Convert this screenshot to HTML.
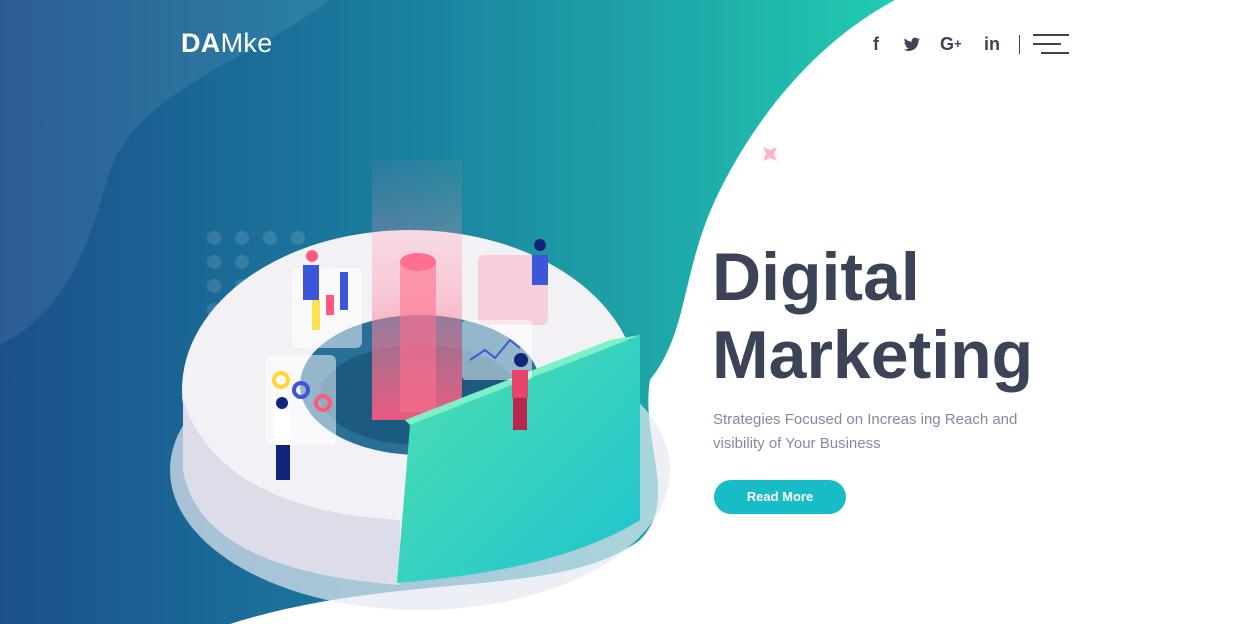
<!DOCTYPE html>
<html><head><meta charset="utf-8"><style>
html,body{margin:0;padding:0;width:1242px;height:624px;overflow:hidden;background:#fff;font-family:"Liberation Sans",sans-serif;position:relative}
.abs{position:absolute}
</style></head><body>
<svg class="abs" style="left:0;top:0" width="1242" height="624">
<defs>
<linearGradient id="bg" x1="0" y1="0" x2="1" y2="0">
<stop offset="0" stop-color="#1b4f8c"/><stop offset="0.45" stop-color="#1a7f9f"/><stop offset="1" stop-color="#22cbb0"/>
</linearGradient>
<linearGradient id="teal" x1="0" y1="0" x2="1" y2="1">
<stop offset="0" stop-color="#4fe0b0"/><stop offset="1" stop-color="#1fc3d0"/>
</linearGradient>
<linearGradient id="pink" x1="0" y1="0" x2="0" y2="1">
<stop offset="0" stop-color="#ff8fa8" stop-opacity="0.05"/><stop offset="0.5" stop-color="#ff8fa8" stop-opacity="0.4"/><stop offset="1" stop-color="#ff5a7e" stop-opacity="0.9"/>
</linearGradient>
</defs>
<path d="M0 0 H895 C820 40 760 110 720 190 C680 270 690 330 650 380 C640 440 680 500 640 540 C560 600 400 570 230 624 H0 Z" fill="url(#bg)"/>
<path d="M0 0 H330 C250 60 140 90 110 170 C90 240 70 310 0 345 Z" fill="#fff" opacity="0.08"/>
<g fill="#fff" opacity="0.12">
<circle cx="214" cy="238" r="7"/><circle cx="242" cy="238" r="7"/><circle cx="270" cy="238" r="7"/><circle cx="298" cy="238" r="7"/>
<circle cx="214" cy="262" r="7"/><circle cx="242" cy="262" r="7"/><circle cx="214" cy="286" r="7"/><circle cx="242" cy="286" r="7"/>
<circle cx="214" cy="310" r="7"/>
</g>
<ellipse cx="420" cy="470" rx="250" ry="140" fill="#e6e8f2" opacity="0.7"/>
<path d="M183 400 Q180 560 400 580 L400 470 Z" fill="#d5d8e6"/>
<ellipse cx="410" cy="390" rx="228" ry="160" fill="#f2f2f6"/>
<path d="M183 400 L183 470 Q200 570 400 585 L400 520 Q220 510 183 400Z" fill="#dcdde8"/>
<ellipse cx="420" cy="385" rx="120" ry="70" fill="#2a6f96"/>
<ellipse cx="420" cy="395" rx="100" ry="50" fill="#1d5a80"/>
<rect x="372" y="160" width="90" height="260" fill="url(#pink)"/>
<ellipse cx="418" cy="262" rx="18" ry="9" fill="#ff6f8f"/>
<rect x="400" y="262" width="36" height="150" fill="#ff6f8f" opacity="0.6"/>
<path d="M410 425 L640 335 L640 520 Q560 570 397 583 Z" fill="url(#teal)"/>
<path d="M410 425 L640 335 L610 340 L405 420 Z" fill="#7ef0c8"/>
<rect x="292" y="268" width="70" height="80" rx="6" fill="#fff" opacity="0.5"/>
<rect x="478" y="255" width="70" height="70" rx="6" fill="#ff8fa8" opacity="0.35"/>
<rect x="462" y="320" width="70" height="60" rx="4" fill="#fff" opacity="0.5"/>
<rect x="266" y="355" width="70" height="90" rx="6" fill="#fff" opacity="0.5"/>
<rect x="340" y="272" width="8" height="38" fill="#3b57d8"/><rect x="326" y="295" width="8" height="20" fill="#ff5a7e"/><rect x="312" y="300" width="8" height="30" fill="#ffe14d"/>
<circle cx="281" cy="380" r="7" fill="none" stroke="#ffd633" stroke-width="4"/>
<circle cx="301" cy="390" r="7" fill="none" stroke="#3b57d8" stroke-width="4"/>
<circle cx="323" cy="403" r="7" fill="none" stroke="#ff5a7e" stroke-width="4"/>
<path d="M470 360 L485 350 L495 358 L510 340 L520 348" stroke="#3b57d8" stroke-width="2" fill="none"/>
<rect x="274" y="410" width="16" height="35" fill="#fff"/><rect x="276" y="445" width="14" height="35" fill="#12237a"/><circle cx="282" cy="403" r="6" fill="#12237a"/>
<rect x="512" y="370" width="16" height="28" fill="#e8446a"/><rect x="513" y="398" width="14" height="32" fill="#b8264e"/><circle cx="521" cy="360" r="7" fill="#12237a"/>
<rect x="532" y="255" width="16" height="30" fill="#3b57d8"/><circle cx="540" cy="245" r="6" fill="#12237a"/>
<circle cx="312" cy="256" r="6" fill="#ff5a7e"/><rect x="303" y="265" width="16" height="35" fill="#3b57d8"/>
<path d="M763 147 l7 3 l7 -3 l-3 7 l3 7 l-7 -3 l-7 3 l3 -7z" fill="#ffb3c7"/>
<!-- twitter -->
<path transform="translate(904,37) scale(0.68)" fill="#3d4554" d="M23.6 3.3c-.9.4-1.8.6-2.8.8 1-.6 1.8-1.6 2.1-2.7-.9.6-2 1-3.1 1.2C18.9 1.6 17.6 1 16.2 1c-2.7 0-4.9 2.2-4.9 4.9 0 .4 0 .8.1 1.1C7.3 6.8 3.7 4.9 1.3 1.9.8 2.7.6 3.5.6 4.4c0 1.7.9 3.2 2.2 4.1-.8 0-1.6-.2-2.2-.6v.1c0 2.4 1.7 4.4 3.9 4.8-.4.1-.8.2-1.3.2-.3 0-.6 0-.9-.1.6 2 2.4 3.4 4.6 3.4-1.7 1.3-3.8 2.1-6.1 2.1-.4 0-.8 0-1.2-.1 2.2 1.4 4.8 2.2 7.5 2.2 9.1 0 14-7.5 14-14v-.6c1-.7 1.8-1.6 2.5-2.6z"/>
</svg>
<div class="abs" style="left:181px;top:28px;color:#fff;font-size:27px;letter-spacing:0.3px"><b>DA</b>Mke</div>
<div class="abs" style="left:873px;top:34px;color:#3d4554;font-size:18px;font-weight:bold">f</div>
<div class="abs" style="left:940px;top:34px;color:#3d4554;font-size:18px;font-weight:bold">G<span style="font-size:13px;vertical-align:2px">+</span></div>
<div class="abs" style="left:984px;top:34px;color:#3d4554;font-size:18px;font-weight:bold">in</div>
<div class="abs" style="left:1019px;top:35px;width:1px;height:19px;background:#3d4554"></div>
<div class="abs" style="left:1033px;top:34px;width:36px;height:2px;background:#3d4554"></div>
<div class="abs" style="left:1033px;top:43px;width:28px;height:2px;background:#3d4554"></div>
<div class="abs" style="left:1041px;top:52px;width:28px;height:2px;background:#3d4554"></div>
<div class="abs" style="left:712px;top:238px;color:#3a4456;font-size:68px;line-height:78px;font-weight:bold;letter-spacing:0px">Digital<br>Marketing</div>
<div class="abs" style="left:713px;top:408px;color:#848a9e;font-size:15px;line-height:24px">Strategies Focused on Increas ing Reach and<br>visibility of Your Business</div>
<div class="abs" style="left:714px;top:480px;width:132px;height:34px;border-radius:17px;background:#17bcc6;color:#fff;font-size:13px;font-weight:bold;text-align:center;line-height:34px">Read More</div>
</body></html>
